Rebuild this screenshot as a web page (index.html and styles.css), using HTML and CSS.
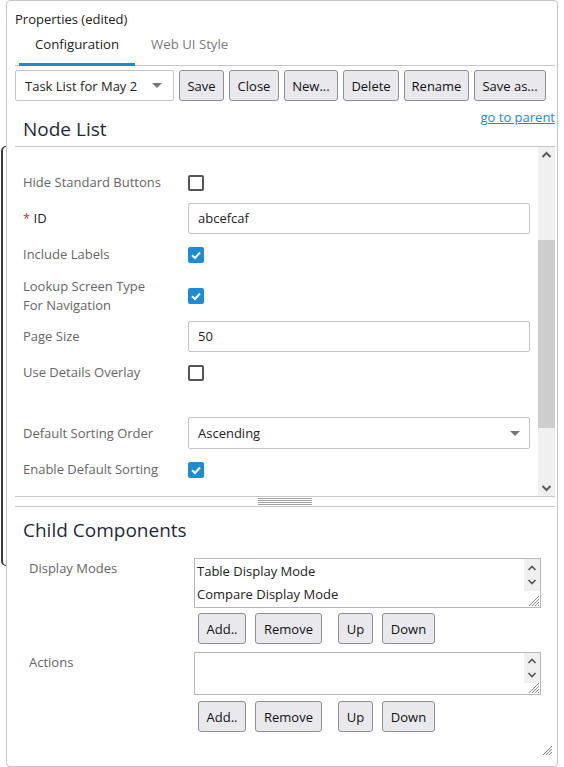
FILE: index.html
```html
<!DOCTYPE html>
<html>
<head>
<meta charset="utf-8">
<link rel="stylesheet" href="styles.css">
</head>
<body>
<div class="backdrop"></div>
<div class="panel">
  <div class="title">Properties (edited)</div>
  <div class="tabs">
    <div class="tab active">Configuration</div>
    <div class="tab">Web UI Style</div>
  </div>
  <div class="toolbar">
    <div class="select task-select"><span>Task List for May 2</span><span class="caret"></span></div>
    <button class="btn w-save">Save</button>
    <button class="btn w-close">Close</button>
    <button class="btn w-new">New...</button>
    <button class="btn w-delete">Delete</button>
    <button class="btn w-rename">Rename</button>
    <button class="btn w-saveas">Save as...</button>
  </div>
  <div class="section-head">
    <h2 class="heading">Node List</h2>
    <a class="link" href="#">go to parent</a>
  </div>
  <div class="scroller">
    <div class="form">
      <div class="row">
        <div class="label">Hide Standard Buttons</div>
        <div class="control"><span class="check"></span></div>
      </div>
      <div class="row">
        <div class="label label-dark"><span class="req">*</span> ID</div>
        <div class="control"><div class="input">abcefcaf</div></div>
      </div>
      <div class="row">
        <div class="label">Include Labels</div>
        <div class="control"><span class="check on"><svg viewBox="0 0 16 16" width="16" height="16"><polyline points="4,8.2 7,11 12,5.5" fill="none" stroke="#fff" stroke-width="2"/></svg></span></div>
      </div>
      <div class="row row-two">
        <div class="label">Lookup Screen Type<br>For Navigation</div>
        <div class="control"><span class="check on"><svg viewBox="0 0 16 16" width="16" height="16"><polyline points="4,8.2 7,11 12,5.5" fill="none" stroke="#fff" stroke-width="2"/></svg></span></div>
      </div>
      <div class="row">
        <div class="label">Page Size</div>
        <div class="control"><div class="input">50</div></div>
      </div>
      <div class="row">
        <div class="label">Use Details Overlay</div>
        <div class="control"><span class="check"></span></div>
      </div>
      <div class="row row-empty"></div>
      <div class="row">
        <div class="label">Default Sorting Order</div>
        <div class="control"><div class="select sort-select"><span>Ascending</span><span class="caret"></span></div></div>
      </div>
      <div class="row">
        <div class="label">Enable Default Sorting</div>
        <div class="control"><span class="check on"><svg viewBox="0 0 16 16" width="16" height="16"><polyline points="4,8.2 7,11 12,5.5" fill="none" stroke="#fff" stroke-width="2"/></svg></span></div>
      </div>
    </div>
    <div class="vscroll">
      <div class="sb-arrow"><svg viewBox="0 0 17 17" width="17" height="17"><polyline points="4.5,10 8.5,6 12.5,10" fill="none" stroke="#5a5a5a" stroke-width="2"/></svg></div>
      <div class="track"><div class="thumb"></div></div>
      <div class="sb-arrow"><svg viewBox="0 0 17 17" width="17" height="17"><polyline points="4.5,7 8.5,11 12.5,7" fill="none" stroke="#5a5a5a" stroke-width="2"/></svg></div>
    </div>
  </div>
  <div class="splitter"><div class="grip"></div></div>
  <h2 class="heading child-title">Child Components</h2>
  <div class="list-row">
    <div class="list-label">Display Modes</div>
    <div class="list-col">
      <div class="listbox lb-modes">
        <div class="items">
          <div class="item">Table Display Mode</div>
          <div class="item">Compare Display Mode</div>
        </div>
        <div class="lb-scroll">
          <svg viewBox="0 0 16 14" width="16" height="14"><polyline points="4.5,9 8,5.5 11.5,9" fill="none" stroke="#555" stroke-width="1.6"/></svg>
          <svg viewBox="0 0 16 14" width="16" height="14"><polyline points="4.5,5 8,8.5 11.5,5" fill="none" stroke="#555" stroke-width="1.6"/></svg>
        </div>
        <svg class="lb-grip" viewBox="0 0 14 14" width="14" height="14"><line x1="13" y1="3" x2="3" y2="13" stroke="#888" stroke-width="1"/><line x1="13" y1="6" x2="6" y2="13" stroke="#888" stroke-width="1"/><line x1="13" y1="9" x2="9" y2="13" stroke="#888" stroke-width="1"/><line x1="13" y1="12" x2="12" y2="13" stroke="#888" stroke-width="1"/></svg>
      </div>
      <div class="list-buttons">
        <button class="btn b-add">Add..</button>
        <button class="btn b-remove">Remove</button>
        <button class="btn b-up">Up</button>
        <button class="btn b-down">Down</button>
      </div>
    </div>
  </div>
  <div class="list-row">
    <div class="list-label">Actions</div>
    <div class="list-col">
      <div class="listbox lb-actions">
        <div class="items"></div>
        <div class="lb-scroll">
          <svg viewBox="0 0 16 14" width="16" height="14"><polyline points="4.5,9 8,5.5 11.5,9" fill="none" stroke="#555" stroke-width="1.6"/></svg>
          <svg viewBox="0 0 16 14" width="16" height="14"><polyline points="4.5,5 8,8.5 11.5,5" fill="none" stroke="#555" stroke-width="1.6"/></svg>
        </div>
        <svg class="lb-grip" viewBox="0 0 14 14" width="14" height="14"><line x1="13" y1="3" x2="3" y2="13" stroke="#888" stroke-width="1"/><line x1="13" y1="6" x2="6" y2="13" stroke="#888" stroke-width="1"/><line x1="13" y1="9" x2="9" y2="13" stroke="#888" stroke-width="1"/><line x1="13" y1="12" x2="12" y2="13" stroke="#888" stroke-width="1"/></svg>
      </div>
      <div class="list-buttons lb-gap">
        <button class="btn b-add">Add..</button>
        <button class="btn b-remove">Remove</button>
        <button class="btn b-up">Up</button>
        <button class="btn b-down">Down</button>
      </div>
    </div>
  </div>
  <svg class="panel-grip" viewBox="0 0 12 12" width="12" height="12"><line x1="11" y1="2" x2="2" y2="11" stroke="#777" stroke-width="1"/><line x1="11" y1="5" x2="5" y2="11" stroke="#777" stroke-width="1"/><line x1="11" y1="8" x2="8" y2="11" stroke="#777" stroke-width="1"/></svg>
</div>
</body>
</html>
```

FILE: styles.css
```css
* { box-sizing: border-box; }
html, body { margin: 0; padding: 0; background: #fff; }
body {
  font-family: "Open Sans", "Noto Sans", "Liberation Sans", sans-serif;
  font-size: 13px;
  color: #222;
  position: relative;
  width: 564px;
  height: 767px;
  overflow: hidden;
}
.backdrop {
  position: absolute;
  left: 1px;
  top: 146px;
  width: 12px;
  height: 420px;
  border-left: 2px solid #3a3a3a;
  border-top: 1px solid #3a3a3a;
  border-bottom: 1px solid #3a3a3a;
  border-radius: 5px 0 0 5px;
}
.panel {
  position: relative;
  margin-left: 6px;
  width: 552px;
  height: 767px;
  border: 1px solid #c6c6c6;
  border-radius: 4px;
  background: #fff;
  padding: 0 2px 0 8px;
}
.title {
  padding-top: 9px;
  line-height: 18px;
  font-size: 13px;
  color: #222;
}
.tabs {
  display: flex;
  margin-top: 2px;
  border-bottom: 1px solid #c8c8c8;
  padding-left: 4px;
}
.tab {
  padding: 6px 16px 0;
  height: 36px;
  line-height: 16px;
  font-size: 13.2px;
  color: #7a7a7a;
  border-bottom: 3px solid transparent;
  margin-bottom: -1px;
}
.tab.active {
  color: #222;
  border-bottom-color: #1c8bd0;
}
.toolbar {
  display: flex;
  gap: 5px;
  margin-top: 4px;
  height: 31px;
}
.btn {
  font-family: inherit;
  font-size: 13px;
  color: #111;
  background: #e9e9ed;
  border: 1px solid #8f8f96;
  border-radius: 3px;
  height: 31px;
  padding: 0 6px;
  margin: 0;
}
.w-save { width: 45px; }
.w-close { width: 50px; }
.w-new { width: 54px; }
.w-delete { width: 56px; }
.w-rename { width: 65px; }
.w-saveas { width: 72px; }
.select {
  display: flex;
  align-items: center;
  justify-content: space-between;
  border: 1px solid #c4c4c4;
  border-radius: 2px;
  height: 31px;
  padding: 0 11px 0 9px;
  font-size: 13px;
  color: #222;
  background: #fff;
}
.task-select { width: 159px; }
.caret {
  width: 0;
  height: 0;
  border-left: 5px solid transparent;
  border-right: 5px solid transparent;
  border-top: 5px solid #777;
}
.section-head {
  display: flex;
  justify-content: space-between;
  align-items: flex-start;
  height: 46px;
  border-bottom: 1px solid #c8c8c8;
  padding-left: 8px;
}
.heading {
  margin: 0;
  font-weight: normal;
  font-size: 19px;
  line-height: 26px;
  color: #1e2b3a;
}
.section-head .heading { margin-top: 15px; }
.link {
  margin-top: 7px;
  color: #1a8ad4;
  font-size: 13px;
  line-height: 18px;
  text-decoration: underline;
}
.scroller {
  display: flex;
  height: 350px;
  border-bottom: 1px solid #c8c8c8;
}
.form {
  flex: 1;
  padding: 20px 8px 0 8px;
}
.row {
  display: flex;
  align-items: center;
  min-height: 31px;
  margin-bottom: 5px;
}
.row-two { min-height: 41px; }
.row-empty { min-height: 19px; }
.label {
  width: 165px;
  flex: none;
  color: #666;
  line-height: 19px;
  font-size: 13px;
}
.label-dark { color: #222; }
.req { color: #d0312d; }
.control { flex: 1; display: flex; align-items: center; }
.input {
  width: 100%;
  height: 31px;
  border: 1px solid #c4c4c4;
  border-radius: 2px;
  padding: 0 9px;
  line-height: 29px;
  font-size: 13px;
  color: #222;
}
.sort-select { width: 100%; height: 32px; padding-right: 9px; }
.check {
  display: block;
  width: 16px;
  height: 16px;
  border: 2px solid #555;
  border-radius: 2px;
  margin-left: 0;
}
.check.on {
  border: none;
  background: #1c8dd3;
}
.check svg { display: block; }
.vscroll {
  width: 17px;
  flex: none;
  display: flex;
  flex-direction: column;
  background: #f0f0f0;
}
.sb-arrow { height: 17px; }
.sb-arrow svg { display: block; }
.track { flex: 1; position: relative; }
.thumb {
  position: absolute;
  left: 0;
  right: 0;
  top: 76px;
  height: 188px;
  background: #cdcdcd;
}
.splitter {
  height: 10px;
  border-bottom: 1px solid #c8c8c8;
  display: flex;
  justify-content: center;
  align-items: center;
}
.grip {
  width: 54px;
  height: 7px;
  background: repeating-linear-gradient(to bottom, #a0a0a0 0, #a0a0a0 1px, transparent 1px, transparent 2px);
}
.child-title {
  margin-top: 10px;
  padding-left: 8px;
}
.list-row {
  display: flex;
  padding-left: 14px;
  margin-top: 15px;
}
.list-row + .list-row { margin-top: 8px; }
.list-label {
  width: 165px;
  flex: none;
  color: #666;
  font-size: 13px;
  line-height: 18px;
  padding-top: 1px;
}
.list-col { width: 347px; }
.listbox {
  position: relative;
  display: flex;
  border: 1px solid #b8b8b8;
  background: #fff;
}
.lb-modes { height: 50px; }
.lb-actions { height: 43px; }
.items {
  flex: 1;
  padding: 1px 2px;
  font-size: 13px;
  color: #222;
}
.item { line-height: 23px; }
.lb-scroll {
  width: 16px;
  height: 32px;
  background: #f0f0f0;
  display: flex;
  flex-direction: column;
  justify-content: center;
}
.lb-actions .lb-scroll { height: 30px; }
.lb-scroll svg { display: block; }
.lb-grip {
  position: absolute;
  right: 0;
  bottom: 0;
}
.list-buttons {
  display: flex;
  padding-left: 4px;
  margin-top: 5px;
}
.list-buttons.lb-gap { margin-top: 6px; }
.b-add { width: 48px; }
.b-remove { width: 67px; margin-left: 9px; }
.b-up { width: 35px; margin-left: 16px; }
.b-down { width: 53px; margin-left: 9px; }
.panel-grip {
  position: absolute;
  right: 4px;
  bottom: 10px;
}
```
